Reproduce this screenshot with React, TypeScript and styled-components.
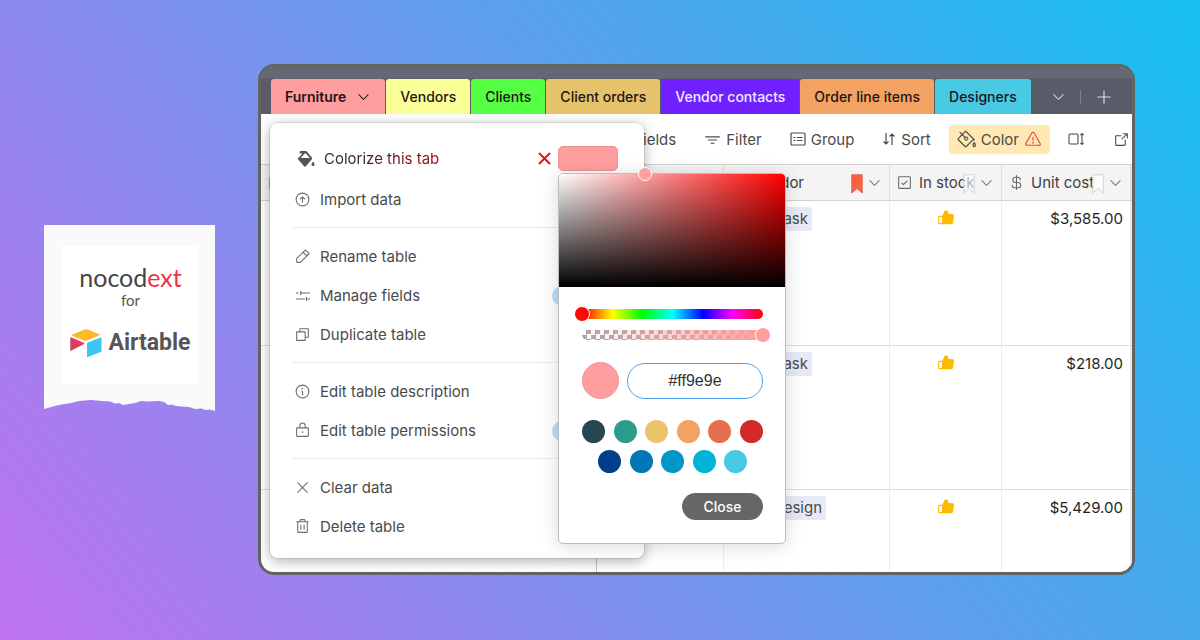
import React, { useState } from "react";
import styled, { createGlobalStyle } from "styled-components";
import {
  PiArrowCircleUp, PiArrowSquareOut, PiCaretDown, PiCheckSquare, PiCopy, PiCurrencyDollar,
  PiFunnelSimple, PiInfo, PiLock, PiPaintBucket, PiPencilSimple, PiThumbsUpFill,
  PiTrash, PiWarning, PiX, PiPlus, PiEyeSlash, PiTreeStructure,
} from "react-icons/pi";

const GlobalStyle = createGlobalStyle`
  * { box-sizing: border-box; }
  body { margin: 0; font-family: Inter, "Liberation Sans", sans-serif; color: #4a4a4c; font-size: 15px; }
  button, input { font: inherit; color: inherit; }
  button { padding: 0; border: 0; background: none; cursor: pointer; }
  svg { display: block; flex: none; }
`;

const Page = styled.main`
  min-height: 100vh;
  display: flex;
  align-items: center;
  gap: 43px;
  padding: 64px 65px 65px 44px;
  background: linear-gradient(52deg, #bf72ee 0%, #15c0ee 100%);
`;

const Note = styled.aside`
  flex: none;
  width: 171px;
  margin-bottom: 2px;
`;

const NoteBody = styled.div`
  padding: 21px 16px 14px 18px;
  background: #fafafa;
`;

const Logo = styled.div`
  display: flex;
  flex-direction: column;
  align-items: center;
  padding: 16px 0 25px;
  background: #fff;
`;

const Brand = styled.h1`
  margin: 0;
  font: 400 25px/30px Lato, sans-serif;
  color: #454545;
`;

const BrandAccent = styled.span`
  color: #f0353f;
`;

const For = styled.p`
  margin: 0;
  font: 400 15px/16px Lato, sans-serif;
  color: #555;
`;

const Airtable = styled.p`
  display: flex;
  align-items: center;
  gap: 6px;
  margin: 19px 0 0;
  font: 700 23px/32px Roboto, sans-serif;
  color: #555557;
`;

const Window = styled.section`
  flex: 1;
  min-width: 0;
  position: relative;
  border: 3px solid #63635f;
  border-radius: 16px;
  background: #fff;
`;

const Clip = styled.div`
  overflow: hidden;
  border-radius: 12px;
`;

const TabBar = styled.nav`
  display: flex;
  align-items: center;
  gap: 1px;
  padding: 12px 0 0 10px;
  background: linear-gradient(#646872 0, #646872 11px, #595c68 12px);
`;

const Tab = styled.button<{ $color: string; $text?: string; $active?: boolean }>`
  display: flex;
  align-items: center;
  gap: 10px;
  height: 35px;
  padding: 0 14px;
  border-radius: 3px 3px 0 0;
  background: ${(p) => p.$color};
  color: ${(p) => p.$text || "#1f1519"};
  font-size: 14px;
  font-weight: ${(p) => (p.$active ? 600 : 500)};
  white-space: nowrap;
`;

const TabTools = styled.div`
  display: flex;
  align-items: center;
  gap: 14px;
  padding-left: 19px;
  color: #dcdde0;
`;

const TabDivider = styled.span`
  width: 1px;
  height: 14px;
  background: #7c7e88;
`;

const Toolbar = styled.div`
  display: flex;
  justify-content: flex-end;
  align-items: center;
  height: 50px;
  padding-right: 2px;
`;

const Tool = styled.button<{ $gap?: number; $highlight?: boolean }>`
  display: flex;
  align-items: center;
  gap: 5px;
  height: 29px;
  margin-left: ${(p) => p.$gap ?? 28}px;
  padding: ${(p) => (p.$highlight ? "0 8px" : "0")};
  border-radius: 4px;
  background: ${(p) => (p.$highlight ? "#ffe8b2" : "none")};
  white-space: nowrap;
`;

const Alert = styled.span`
  color: #ee3b55;
`;

const Grid = styled.table`
  width: 100%;
  table-layout: fixed;
  border-collapse: separate;
  border-spacing: 0;
`;

const Col = styled.col<{ $width?: number }>`
  width: ${(p) => (p.$width ? `${p.$width}px` : "auto")};
`;

const Head = styled.th<{ $strong?: boolean }>`
  position: relative;
  height: 37px;
  padding: 0 8px 0 6px;
  font-weight: 400;
  text-align: left;
  background: #f4f4f4;
  border: solid #d3d3d3;
  border-width: 1px 0;
  box-shadow: inset -1px 0 ${(p) => (p.$strong ? "#c4c4c4" : "#dfdfdf")};
`;

const HeadInner = styled.div`
  display: flex;
  align-items: center;
  gap: 3px;
  white-space: nowrap;
  color: #6b6b6e;
`;

const HeadLabel = styled.span`
  flex: 1;
  padding-left: 3px;
  color: #3f3f42;
`;

const Mark = styled.span`
  position: absolute;
  top: 9px;
  right: 27px;
`;

const Cell = styled.td<{ $height: number; $strong?: boolean; $align?: string }>`
  height: ${(p) => p.$height}px;
  padding: 6px 8px;
  vertical-align: top;
  line-height: 24px;
  color: #1f1f22;
  text-align: ${(p) => p.$align || "left"};
  border-bottom: 1px solid #dedede;
  box-shadow: inset -1px 0 ${(p) => (p.$strong ? "#c4c4c4" : "#ededed")};
  tr:last-child > & { border-bottom: 0; }
`;

const Thumb = styled.div`
  display: flex;
  justify-content: center;
  padding-top: 2px;
  color: #ffb800;
`;

const Chip = styled.span<{ $width: number }>`
  display: inline-block;
  min-width: ${(p) => p.$width}px;
  padding: 0 4px;
  border-radius: 3px;
  background: #e6eaf7;
  color: #4a4a4c;
  text-align: right;
`;

const RowSelect = styled.input`
  display: block;
  appearance: none;
  width: 12px;
  height: 12px;
  margin: 0 2px;
  border: 1px solid #aaa;
`;

const Menu = styled.div`
  position: absolute;
  z-index: 2;
  top: 56px;
  left: 9px;
  width: 374px;
  padding: 15px 22px 12px;
  border-radius: 8px;
  background: #fff;
  box-shadow: 0 0 0 1px rgba(0, 0, 0, 0.08), 0 3px 14px rgba(0, 0, 0, 0.32);
`;

const ColorizeRow = styled.div`
  display: flex;
  align-items: center;
  height: 41px;
  margin-bottom: 1px;
  padding: 0 4px 0 5px;
`;

const ColorizeLabel = styled.span`
  flex: 1;
  margin-left: 9px;
  background: linear-gradient(90deg, #3a2a2c 0, #3a2426 40px, #a80d14 110px);
  background-clip: text;
  color: transparent;
`;

const Reset = styled.button`
  margin-right: 7px;
  color: #f50f12;
`;

const SwatchSlot = styled.div`
  position: relative;
  height: 25px;
`;

const TabSwatch = styled.button`
  display: block;
  width: 60px;
  height: 25px;
  border-radius: 5px;
  border: 1px solid #ef9292;
  background: #ff9e9e;
`;

const MenuItem = styled.button`
  display: flex;
  align-items: center;
  gap: 9px;
  width: 100%;
  height: 39px;
  padding: 0 2px;
  text-align: left;
  color: #4a4a4c;
`;

const MenuIcon = styled.span`
  display: flex;
  justify-content: center;
  width: 17px;
  color: #6d6d6d;
`;

const MenuLabel = styled.span`
  flex: 1;
`;

const PlanBadge = styled.span`
  width: 68px;
  height: 20px;
  border-radius: 10px;
  background: #bcdcff;
`;

const Rule = styled.hr`
  height: 1px;
  margin: 8px 0 9px;
  border: 0;
  background: #ebebeb;
`;

const Picker = styled.div`
  position: absolute;
  z-index: 3;
  top: 27px;
  left: 0;
  width: 228px;
  border: 1px solid #bdbdbd;
  border-radius: 5px;
  background: #fff;
  box-shadow: 0 2px 18px rgba(0, 0, 0, 0.16);
`;

const Saturation = styled.div`
  position: relative;
  height: 113px;
  border-radius: 4px 4px 0 0;
  background: linear-gradient(transparent, #000), linear-gradient(90deg, #fff, #ff0000);
`;

const Handle = styled.span`
  position: absolute;
  width: 14px;
  height: 14px;
  margin: -7px 0 0 -7px;
  border: 1px solid #fff;
  border-radius: 50%;
  background: #ff9e9e;
`;

const Controls = styled.div`
  display: flex;
  flex-direction: column;
  padding: 22px 22px 23px 23px;
`;

const Track = styled.div<{ $alpha?: boolean }>`
  display: flex;
  height: 10px;
  margin-bottom: ${(p) => (p.$alpha ? 22 : 11)}px;
  border-radius: 5px;
  background: ${(p) =>
    p.$alpha
      ? "linear-gradient(90deg, rgba(255,158,158,0), #ff9e9e), repeating-conic-gradient(#aaa 0 25%, #fff 0 50%) 0 0 / 9px 9px"
      : "linear-gradient(90deg, #f00, #ff0 17%, #0f0 33%, #0ff 50%, #00f 67%, #f0f 83%, #f00)"};
`;

const Slider = styled.input<{ $thumb: string }>`
  appearance: none;
  flex: none;
  width: calc(100% + 16px);
  height: 10px;
  margin: 0 -8px;
  background: none;
  &::-webkit-slider-thumb {
    appearance: none;
    width: 16px;
    height: 16px;
    border: 1px solid #fff;
    border-radius: 50%;
    background: ${(p) => p.$thumb};
  }
`;

const ValueRow = styled.div`
  display: flex;
  align-items: center;
  gap: 8px;
  margin-bottom: 21px;
`;

const Preview = styled.span`
  flex: none;
  width: 37px;
  height: 37px;
  border: 1px solid #ee9595;
  border-radius: 50%;
  background: #ff9e9e;
`;

const HexInput = styled.input`
  flex: 1;
  min-width: 0;
  height: 36px;
  padding: 0;
  border: 1px solid #4a9ff0;
  border-radius: 18px;
  outline: 0;
  background: #fff;
  text-align: center;
  font: 16px "Liberation Sans", sans-serif;
  color: #333;
`;

const Palette = styled.div<{ $inset?: boolean }>`
  display: flex;
  justify-content: space-between;
  padding: 0 ${(p) => (p.$inset ? 16 : 0)}px;
  margin-bottom: ${(p) => (p.$inset ? 20 : 7)}px;
`;

const Dot = styled.button<{ $color: string }>`
  width: 23px;
  height: 23px;
  border-radius: 50%;
  background: ${(p) => p.$color};
`;

const Close = styled.button`
  align-self: flex-end;
  width: 81px;
  height: 27px;
  border-radius: 14px;
  background: #666;
  color: #fff;
  font-size: 14px;
  font-weight: 500;
`;

const Bucket = () => (
  <svg width="18" height="18" viewBox="0 0 18 18" fill="#555" aria-hidden="true">
    <path fillRule="evenodd" d="M3.500 1h5.200c.5 0 .9.200 1.200.6l4.900 5.900c.5.600.5 1.100 0 1.700l-5.900 7c-.5.600-1.300.6-1.800 0L1.300 9.700c-.5-.6-.5-1.100 0-1.700l4.200-4.600H3.300C2.300 3.400 2.400 1 3.500 1ZM3.600 8h9.300L8.700 3.200H8Z" />
    <path d="M16 11.500c1 1.400 1.500 2.300 1.500 3a1.500 1.500 0 0 1-3 0c0-.7.500-1.600 1.500-3Z" />
  </svg>
);

const Cross = () => (
  <svg width="13" height="13" viewBox="0 0 13 13" fill="none" stroke="currentColor" strokeWidth="2" aria-hidden="true">
    <path d="M1 1l11 11M12 1 1 12" />
  </svg>
);

const GroupIcon = () => (
  <svg width="16" height="16" viewBox="0 0 16 16" fill="none" stroke="currentColor" strokeWidth="1.200" aria-hidden="true">
    <rect x="1" y="2" width="14" height="12" rx="1" />
    <path d="M3.500 6.500h2M7 6.500h5.500M3.500 9.500h2M7 9.500h5.500" />
  </svg>
);

const SortIcon = () => (
  <svg width="14" height="16" viewBox="0 0 14 16" fill="none" stroke="currentColor" strokeWidth="1.200" aria-hidden="true">
    <path d="M4 2v11M1.500 10.500 4 13l2.500-2.500M10 14V3M7.500 5.500 10 3l2.500 2.500" />
  </svg>
);

const HeightIcon = () => (
  <svg width="17" height="16" viewBox="0 0 17 16" fill="none" stroke="currentColor" strokeWidth="1.100" aria-hidden="true">
    <rect x="1" y="3" width="9" height="10" rx="1" />
    <path d="M14 2.500v11M12.400 4.200 14 2.600l1.600 1.600M12.400 11.800 14 13.400l1.600-1.600" />
  </svg>
);

const FieldsIcon = () => (
  <svg width="16" height="16" viewBox="0 0 16 16" fill="none" stroke="currentColor" strokeWidth="1.200" aria-hidden="true">
    <path d="M1 5h2.500M5.500 5H15M5.800 3v4M1 11h9M12.500 11H15M11.500 9v4" />
  </svg>
);

const Flag = ({ filled }: { filled?: boolean }) => (
  <svg width="12" height="20" viewBox="0 0 12 20" aria-hidden="true">
    <path
      d="M.8.800h10.400v18.200L6 14.500.8 19Z"
      fill={filled ? "#ff6040" : "rgba(255,255,255,.6)"}
      stroke={filled ? "#d8644c" : "#d2d2d2"}
    />
  </svg>
);

const AirtableMark = () => (
  <svg width="32" height="29" viewBox="0 0 32 29" aria-hidden="true">
    <path d="M14.500.5c1-.4 2-.4 3 0l11.700 4.700c.9.400.9 1 0 1.300L17 11.500c-1 .4-2 .4-3 0L2.500 7c-.9-.4-.9-1 0-1.400Z" fill="#fcb928" />
    <path d="M17 14.800c0-.6.3-1 .8-1.200l12.700-5c.6-.2 1 0 1 .7v12.500c0 .6-.3 1-.8 1.200L18 28.100c-.6.200-1 0-1-.7Z" fill="#3cc5f3" />
    <path d="M.5 9c0-.6.400-.8 1-.5l12.700 5.600c.4.2.4.600 0 .8L1.500 21.600c-.6.300-1 0-1-.6Z" fill="#e8385f" />
    <path d="M.5 21V9l6 6.500-5 6c-.6.300-1 0-1-.5Z" fill="#c4475c" />
  </svg>
);

const TornEdge = () => (
  <svg width="171" height="14" viewBox="0 0 171 14" aria-hidden="true">
    <path
      fill="#fafafa"
      d="M0 0H171V13L166 11.500 162 12 157 10.500 151 11 145 9 138 8.500 132 8 128 6.500 124 7 120 4 115 3 104 3.500 97 3 91 5 85 6 79 7 75 5 71 5.500 66 3.500 58 3 47 2 35 3 27 5 17 6.500 9 8.500 0 11Z"
    />
  </svg>
);

const TABS = [
  { name: "Vendors", color: "#fbff98" },
  { name: "Clients", color: "#55ff42" },
  { name: "Client orders", color: "#e6c36a" },
  { name: "Vendor contacts", color: "#701fff", text: "#f3ecff" },
  { name: "Order line items", color: "#f4a261" },
  { name: "Designers", color: "#48cae4" },
];

const MENU = [
  [{ label: "Import data", icon: <PiArrowCircleUp size={17} /> }],
  [
    { label: "Rename table", icon: <PiPencilSimple size={17} /> },
    { label: "Manage fields", icon: <FieldsIcon />, badge: true },
    { label: "Duplicate table", icon: <PiCopy size={17} /> },
  ],
  [
    { label: "Edit table description", icon: <PiInfo size={17} /> },
    { label: "Edit table permissions", icon: <PiLock size={17} />, badge: true },
  ],
  [
    { label: "Clear data", icon: <PiX size={17} /> },
    { label: "Delete table", icon: <PiTrash size={17} /> },
  ],
];

const ROWS = [
  { vendor: "Kask", chip: 80, price: "$3,585.00", height: 145 },
  { vendor: "Kask", chip: 80, price: "$218.00", height: 144 },
  { vendor: "Design", chip: 94, price: "$5,429.00", height: 82 },
];

const WARM = ["#264653", "#2a9d8f", "#e9c46a", "#f4a261", "#e76f51", "#d62828"];
const COOL = ["#023e8a", "#0077b6", "#0096c7", "#00b4d8", "#48cae4"];

export default function App() {
  const [hex, setHex] = useState("#ff9e9e");

  return (
    <>
      <GlobalStyle />
      <Page>
        <Note>
          <NoteBody>
            <Logo>
              <Brand>nocod<BrandAccent>ext</BrandAccent></Brand>
              <For>for</For>
              <Airtable><AirtableMark />Airtable</Airtable>
            </Logo>
          </NoteBody>
          <TornEdge />
        </Note>

        <Window>
          <Clip>
            <TabBar>
              <Tab $color="#ff9e9e" $active>Furniture <PiCaretDown size={15} /></Tab>
              {TABS.map((t) => (
                <Tab key={t.name} $color={t.color} $text={t.text}>{t.name}</Tab>
              ))}
              <TabTools>
                <button aria-label="All tables"><PiCaretDown size={15} /></button>
                <TabDivider />
                <button aria-label="Add table"><PiPlus size={18} /></button>
              </TabTools>
            </TabBar>

            <Toolbar>
              <Tool><PiEyeSlash size={17} />Hide fields</Tool>
              <Tool><PiFunnelSimple size={17} />Filter</Tool>
              <Tool><GroupIcon />Group</Tool>
              <Tool><SortIcon />Sort</Tool>
              <Tool $highlight $gap={18}>
                <PiPaintBucket size={19} />Color<Alert><PiWarning size={18} /></Alert>
              </Tool>
              <Tool $gap={18} aria-label="Row height"><HeightIcon /></Tool>
              <Tool aria-label="Share view"><PiArrowSquareOut size={17} /></Tool>
            </Toolbar>

            <Grid>
              <colgroup>
                <Col /><Col $width={127} /><Col $width={166} /><Col $width={112} /><Col $width={129} /><Col $width={1} />
              </colgroup>
              <thead>
                <tr>
                  <Head $strong><RowSelect type="checkbox" aria-label="Select all rows" /></Head>
                  <Head />
                  <Head>
                    <HeadInner><PiTreeStructure size={17} /><HeadLabel>Vendor</HeadLabel><PiCaretDown size={15} /></HeadInner>
                    <Mark><Flag filled /></Mark>
                  </Head>
                  <Head>
                    <HeadInner><PiCheckSquare size={17} /><HeadLabel>In stock</HeadLabel><PiCaretDown size={15} /></HeadInner>
                    <Mark><Flag /></Mark>
                  </Head>
                  <Head>
                    <HeadInner><PiCurrencyDollar size={17} /><HeadLabel>Unit cost</HeadLabel><PiCaretDown size={15} /></HeadInner>
                    <Mark><Flag /></Mark>
                  </Head>
                  <Head />
                </tr>
              </thead>
              <tbody>
                {ROWS.map((r) => (
                  <tr key={r.price}>
                    <Cell $height={r.height} $strong />
                    <Cell $height={r.height} />
                    <Cell $height={r.height}><Chip $width={r.chip}>{r.vendor}</Chip></Cell>
                    <Cell $height={r.height}><Thumb><PiThumbsUpFill size={18} aria-label="In stock" /></Thumb></Cell>
                    <Cell $height={r.height} $align="right">{r.price}</Cell>
                    <Cell $height={r.height} />
                  </tr>
                ))}
              </tbody>
            </Grid>
          </Clip>

          <Menu>
            <ColorizeRow>
              <Bucket />
              <ColorizeLabel>Colorize this tab</ColorizeLabel>
              <Reset aria-label="Remove color"><Cross /></Reset>
              <SwatchSlot>
                <TabSwatch aria-label="Tab color" />
                <Picker>
                  <Saturation><Handle style={{ left: "38%", top: "0%" }} /></Saturation>
                  <Controls>
                    <Track><Slider type="range" min={0} max={360} defaultValue={0} $thumb="#ff0a0a" aria-label="Hue" /></Track>
                    <Track $alpha><Slider type="range" min={0} max={100} defaultValue={100} $thumb="#ff9e9e" aria-label="Opacity" /></Track>
                    <ValueRow>
                      <Preview />
                      <HexInput value={hex} onChange={(e) => setHex(e.target.value)} aria-label="Hex color" />
                    </ValueRow>
                    <Palette>{WARM.map((c) => <Dot key={c} $color={c} aria-label={c} />)}</Palette>
                    <Palette $inset>{COOL.map((c) => <Dot key={c} $color={c} aria-label={c} />)}</Palette>
                    <Close>Close</Close>
                  </Controls>
                </Picker>
              </SwatchSlot>
            </ColorizeRow>
            {MENU.map((group, i) => (
              <React.Fragment key={group[0].label}>
                {i > 0 && <Rule />}
                {group.map((item) => (
                  <MenuItem key={item.label}>
                    <MenuIcon>{item.icon}</MenuIcon>
                    <MenuLabel>{item.label}</MenuLabel>
                    {"badge" in item && item.badge && <PlanBadge />}
                  </MenuItem>
                ))}
              </React.Fragment>
            ))}
          </Menu>
        </Window>
      </Page>
    </>
  );
}
